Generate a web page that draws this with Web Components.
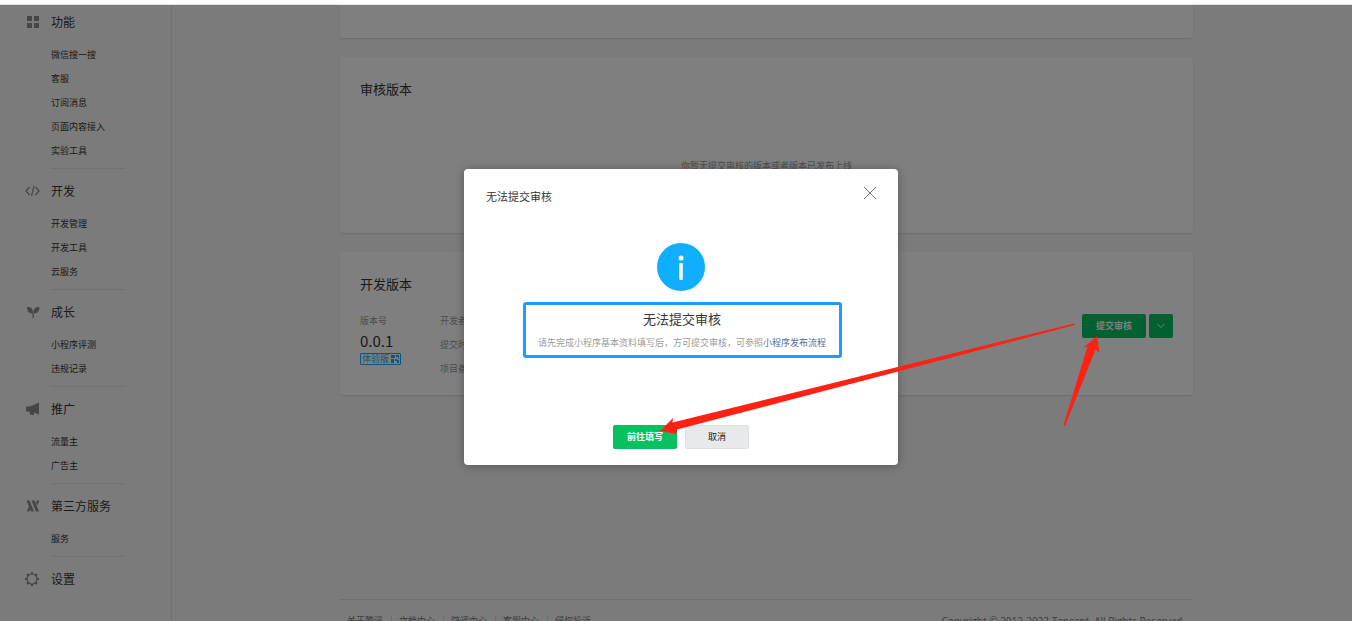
<!DOCTYPE html>
<html lang="zh-CN">
<head>
<meta charset="utf-8">
<title>版本管理</title>
<style>
html, body { margin: 0; height: 100%; overflow: hidden; }
body { font: 9px/24px "Noto Sans CJK SC", "Noto Sans", sans-serif; color: #353535; background: #fff; }
</style>
</head>
<body>
<mp-console></mp-console>

<script>
const define = (name, html, init) => customElements.define(name, class extends HTMLElement {
  connectedCallback() {
    if (this.shadowRoot) return;
    const t = document.createElement('template');
    t.innerHTML = html;
    const content = t.content.cloneNode(true);
    if (init) init.call(this, content);
    this.attachShadow({ mode: 'open' }).append(content);
  }
});

const icons = {
  grid: '<path d="M3 2h5v5H3zM10 2h5v5h-5zM3 9h5v5H3zM10 9h5v5h-5z" fill="currentColor"/>',
  code: '<path d="M5.500 4 2 8l3.500 4M11.500 4 15 8l-3.500 4M10 3 7.500 13" fill="none" stroke="currentColor" stroke-width="1.200"/>',
  sprout: '<path d="M3 3c4-.5 6 1.500 6 5.500v1C5 9.500 3 7.500 3 3zM15.500 3c-4-.5-6 1.500-6.200 5.500v1c4 0 6.200-2 6.200-6.500zM8.500 8h1.300v6H8.500z" fill="currentColor"/>',
  horn: '<path d="M2 5.500h4L15 1.500v12l-5-2V14H6.500l-1.300-3.500H2z" fill="currentColor"/>',
  third: '<path d="M2.500 2.500h3l4.500 11H7zM7.500 2.500h3l4.500 11h-3zM12.800 2.500h2.500l-2 5-1.200-2.600zM5 8.500l1.200 3-1 2H2.800z" fill="currentColor"/>',
  gear: '<circle cx="8" cy="8" r="5" fill="none" stroke="currentColor" stroke-width="1.200"/><path d="M8 1v2M8 13v2M1 8h2M13 8h2M3 3l1.500 1.500M11.500 11.500 13 13M13 3l-1.500 1.500M4.500 11.500 3 13" stroke="currentColor" stroke-width="2"/>'
};

define('mp-icon', `
<style>:host{display:block;width:16px;height:16px;color:#8c8c8c}svg{display:block}</style>
<svg width="16" height="16" viewBox="0 0 16 16" aria-hidden="true"></svg>`,
function (root) { root.querySelector('svg').innerHTML = icons[this.getAttribute('name')]; });

define('mp-nav-group', `
<style>
:host{display:block;padding:0 46px 0 24px;margin-bottom:10px}
.head{display:flex;align-items:center;gap:11px;height:24px;font-size:12px;line-height:24px}
.items{margin:9px 0 0 27px;padding-bottom:5px;border-bottom:1px solid #e4e4e4}
:host([last]) .items{display:none}
</style>
<div class="head"><mp-icon></mp-icon><span></span></div>
<div class="items"><slot></slot></div>`,
function (root) {
  root.querySelector('mp-icon').setAttribute('name', this.getAttribute('icon'));
  root.querySelector('span').textContent = this.getAttribute('label');
});

define('mp-nav-item', `
<style>:host{display:block}a{display:block;height:24px;color:inherit;text-decoration:none;white-space:nowrap}</style>
<a href="#"><slot></slot></a>`);

define('mp-sidebar', `
<style>:host{display:block;flex:none;width:172px;padding-top:5px;box-sizing:border-box;border-right:1px solid #e4e4e4}</style>
<nav>
<mp-nav-group icon="grid" label="功能"><mp-nav-item>微信搜一搜</mp-nav-item><mp-nav-item>客服</mp-nav-item><mp-nav-item>订阅消息</mp-nav-item><mp-nav-item>页面内容接入</mp-nav-item><mp-nav-item>实验工具</mp-nav-item></mp-nav-group>
<mp-nav-group icon="code" label="开发"><mp-nav-item>开发管理</mp-nav-item><mp-nav-item>开发工具</mp-nav-item><mp-nav-item>云服务</mp-nav-item></mp-nav-group>
<mp-nav-group icon="sprout" label="成长"><mp-nav-item>小程序评测</mp-nav-item><mp-nav-item>违规记录</mp-nav-item></mp-nav-group>
<mp-nav-group icon="horn" label="推广"><mp-nav-item>流量主</mp-nav-item><mp-nav-item>广告主</mp-nav-item></mp-nav-group>
<mp-nav-group icon="third" label="第三方服务"><mp-nav-item>服务</mp-nav-item></mp-nav-group>
<mp-nav-group icon="gear" label="设置" last></mp-nav-group>
</nav>`);

define('mp-card', `
<style>
:host{display:block;box-sizing:border-box;padding:20px;margin-bottom:19px;background:#fff;border-radius:3px;box-shadow:0 1px 2px rgba(0,0,0,.12)}
h2{margin:0;font-size:13px;line-height:24px;font-weight:400}
h2:empty{display:none}
</style>
<h2></h2><slot></slot>`,
function (root) { root.querySelector('h2').textContent = this.getAttribute('heading') || ''; });

define('mp-button', `
<style>
:host{display:block}
button{display:flex;align-items:center;justify-content:center;box-sizing:border-box;width:64px;height:24px;padding:0;border:0;border-radius:2px;background:#07c160;color:#fff;font:inherit;font-weight:700;line-height:24px;cursor:pointer}
:host([kind=plain]) button{background:#e8e9eb;color:#1a1a1a;font-weight:400;border:1px solid #dfe0e2}
:host([kind=square]) button{width:24px}
</style>
<button type="button"><slot></slot></button>`,
function (root) { const l = this.getAttribute('label'); if (l) root.querySelector('button').setAttribute('aria-label', l); });

define('mp-version', `
<style>
:host{display:flex;align-items:flex-start;margin-top:13px;color:#9a9a9a}
.version{width:80px}
.version span,.version strong{display:block}
.version span{line-height:24px}
.version strong{font-size:15px;line-height:16px;font-weight:400;color:#353535}
.version a{display:flex;align-items:center;justify-content:space-between;box-sizing:border-box;width:41px;height:12px;margin-top:4px;padding:0 1px;border:1px solid #10aeff;border-radius:1px;color:#10aeff;line-height:10px;text-decoration:none}
ul{list-style:none;margin:0;padding:0;flex:1}
.actions{display:flex;gap:3px;margin-top:5px}
svg{display:block}
</style>
<div class="version"><span>版本号</span><strong>0.0.1</strong>
<a href="#">体验版<svg width="8" height="8" viewBox="0 0 8 8" aria-hidden="true"><path d="M0 0h4v3H0zM5 0h3v4H7V2H5zM0 4h3v4H0zM4 4h2v1h2v3H6V6H4z" fill="currentColor"/></svg></a></div>
<ul><li>开发者</li><li>提交时间</li><li>项目备注</li></ul>
<div class="actions"><mp-button>提交审核</mp-button><mp-button kind="square" label="更多操作"><svg width="8" height="8" viewBox="0 0 8 8" aria-hidden="true"><path d="M.5 2 4 5.500 7.500 2" fill="none" stroke="#fff"/></svg></mp-button></div>`);

define('mp-footer', `
<style>
:host{display:flex;justify-content:space-between;margin-top:204px;padding:9px 8px 0 0;border-top:1px solid #e0e0e0;color:#777;white-space:nowrap}
nav{display:flex;align-items:flex-start}
a{padding:0 8px 0 7px;color:inherit;text-decoration:none;line-height:24px}
a+a{background:linear-gradient(#ddd,#ddd) left center/1px 10px no-repeat;padding-left:8px}
small{font-family:"Open Sans",sans-serif;font-size:10px;line-height:24px}
</style>
<nav><a href="#">关于腾讯</a><a href="#">文档中心</a><a href="#">辟谣中心</a><a href="#">客服中心</a><a href="#">侵权投诉</a></nav>
<small>Copyright © 2012-2022 Tencent. All Rights Reserved.</small>`);

define('mp-dialog', `
<style>
:host{display:flex;flex-direction:column;align-items:center;box-sizing:border-box;width:434px;padding:16px 22px;background:#fff;border-radius:4px;box-shadow:0 1px 10px rgba(0,0,0,.3)}
header{display:flex;justify-content:space-between;align-items:flex-start;align-self:stretch}
h3{margin:0;font-size:11px;line-height:22px;font-weight:400}
.close{display:block;width:12px;height:12px;margin-top:2px;padding:0;border:0;background:none;color:#777;cursor:pointer}
svg{display:block}
.info{margin-top:36px}
.result{box-sizing:border-box;width:319px;margin:11px 0 67px 2px;padding-top:2px;border:3px solid #1e9bff;border-radius:3px;text-align:center;color:#9a9a9a;white-space:nowrap}
h4{margin:0;font-size:13px;line-height:24px;font-weight:400;color:#353535}
p{margin:0;line-height:24px}
p a{color:#576b95;text-decoration:none}
footer{display:flex;gap:8px}
</style>
<header><h3>无法提交审核</h3><button class="close" type="button" aria-label="关闭"><svg width="12" height="12" viewBox="0 0 12 12"><path d="M0 0l12 12M12 0 0 12" stroke="currentColor"/></svg></button></header>
<svg class="info" width="48" height="48" viewBox="0 0 48 48" aria-hidden="true"><circle cx="24" cy="24" r="24" fill="#10aeff"/><circle cx="24" cy="15" r="2.500" fill="#fff"/><rect x="22.200" y="20" width="3.600" height="17" rx="1" fill="#fff"/></svg>
<section class="result"><h4>无法提交审核</h4><p>请先完成小程序基本资料填写后，方可提交审核，可参照<a href="#">小程序发布流程</a></p></section>
<footer><mp-button>前往填写</mp-button><mp-button kind="plain">取消</mp-button></footer>`);

define('mp-arrows', `
<style>:host{display:block;position:absolute;inset:0;pointer-events:none}svg{display:block;width:100%;height:100%}</style>
<svg aria-hidden="true" fill="#ff2113"><path d="M660 431 673 418 672.500 422.500 1074 323.500 1075 325 677 429.500 676.500 434z"/><path d="M1097 336 1099.500 353 1095.500 349.500 1065 426 1063.500 425 1087.500 346.500 1083 348z"/></svg>`);

define('mp-console', `
<style>
:host{display:flex;flex-direction:column;height:100vh;overflow:hidden;position:relative}
.strip{flex:none;height:4px;background:#fff;border-bottom:1px solid #e4e4e4}
.page{flex:1;min-height:0;display:flex;overflow:hidden;background:#f7f7f7}
main{flex:1;min-width:0;padding:0 159px 0 168px}
.first{height:33px;padding:0;border-radius:0 0 3px 3px}
.review{height:176px}
.current{height:143px}
.empty{margin:53px 0 0;text-align:center;color:#9a9a9a}
.mask{position:absolute;inset:5px 0 0;display:flex;align-items:center;justify-content:center;padding:8px 0 0 10px;background:rgba(0,0,0,.5)}
</style>
<div class="strip"></div>
<div class="page"><mp-sidebar></mp-sidebar>
<main><mp-card class="first"></mp-card>
<mp-card class="review" heading="审核版本"><p class="empty">你暂无提交审核的版本或者版本已发布上线</p></mp-card>
<mp-card class="current" heading="开发版本"><mp-version></mp-version></mp-card>
<mp-footer></mp-footer></main></div>
<div class="mask"><mp-dialog role="dialog" aria-modal="true" aria-label="无法提交审核"></mp-dialog></div>
<mp-arrows></mp-arrows>`);
</script>
</body>
</html>
